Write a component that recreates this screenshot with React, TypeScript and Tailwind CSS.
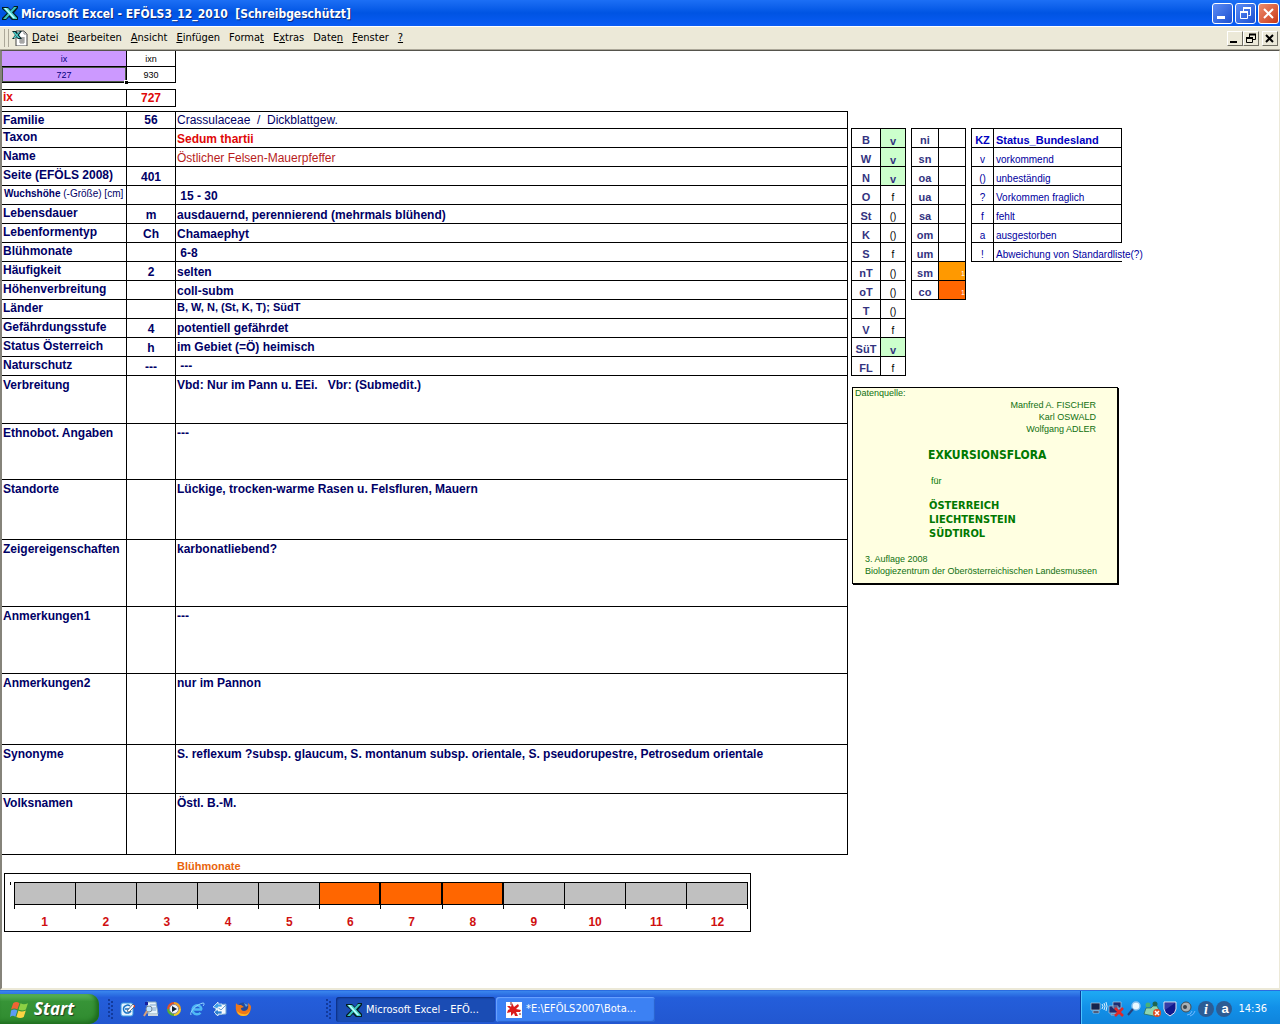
import type { ReactNode } from "react";
import clsx from "clsx";

interface PlantRow {
  label: ReactNode;
  code?: string;
  value?: string;
  height: string;
  valueClass?: string;
  tall?: boolean;
}

const low = "align-bottom";

const plantRows: PlantRow[] = [
  { label: "Familie", code: "56", value: "Crassulaceae  /  Dickblattgew.", height: "h-[17px]", valueClass: "align-bottom font-normal" },
  { label: "Taxon", value: "Sedum thartii", height: "h-[19px]", valueClass: "align-bottom text-[#e00808]" },
  { label: "Name", value: "Östlicher Felsen-Mauerpfeffer", height: "h-[19px]", valueClass: "align-bottom font-normal text-[#b81c1c]" },
  { label: "Seite (EFÖLS 2008)", code: "401", height: "h-[19px]" },
  {
    label: (
      <span className="block pl-px text-[10px] leading-[14px]">
        Wuchshöhe <span className="font-normal">(-Größe) [cm]</span>
      </span>
    ),
    value: " 15 - 30",
    height: "h-[19px]",
    valueClass: low,
  },
  { label: "Lebensdauer", code: "m", value: "ausdauernd, perennierend (mehrmals blühend)", height: "h-[19px]", valueClass: low },
  { label: "Lebenformentyp", code: "Ch", value: "Chamaephyt", height: "h-[19px]", valueClass: low },
  { label: "Blühmonate", value: " 6-8", height: "h-[19px]", valueClass: low },
  { label: "Häufigkeit", code: "2", value: "selten", height: "h-[19px]", valueClass: low },
  { label: "Höhenverbreitung", value: "coll-subm", height: "h-[19px]", valueClass: low },
  { label: "Länder", value: "B, W, N, (St, K, T); SüdT", height: "h-[19px]", valueClass: "align-top text-[11px]" },
  { label: "Gefährdungsstufe", code: "4", value: "potentiell gefährdet", height: "h-[19px]", valueClass: "align-middle" },
  { label: "Status Österreich", code: "h", value: "im Gebiet (=Ö) heimisch", height: "h-[19px]", valueClass: "align-middle" },
  { label: "Naturschutz", code: "---", value: " ---", height: "h-[19px]", valueClass: "align-middle" },
  { label: "Verbreitung", value: "Vbd: Nur im Pann u. EEi.   Vbr: (Submedit.)", height: "h-[48px]", tall: true },
  { label: "Ethnobot. Angaben", value: "---", height: "h-[56px]", tall: true },
  { label: "Standorte", value: "Lückige, trocken-warme Rasen u. Felsfluren, Mauern", height: "h-[60px]", tall: true },
  { label: "Zeigereigenschaften", value: "karbonatliebend?", height: "h-[67px]", tall: true },
  { label: "Anmerkungen1", value: "---", height: "h-[67px]", tall: true },
  { label: "Anmerkungen2", value: "nur im Pannon", height: "h-[71px]", tall: true },
  { label: "Synonyme", value: "S. reflexum ?subsp. glaucum, S. montanum subsp. orientale, S. pseudorupestre, Petrosedum orientale", height: "h-[49px]", tall: true },
  { label: "Volksnamen", value: "Östl. B.-M.", height: "h-[61px]", tall: true },
];

const states: [string, string][] = [
  ["B", "v"],
  ["W", "v"],
  ["N", "v"],
  ["O", "f"],
  ["St", "()"],
  ["K", "()"],
  ["S", "f"],
  ["nT", "()"],
  ["oT", "()"],
  ["T", "()"],
  ["V", "f"],
  ["SüT", "v"],
  ["FL", "f"],
];

const zones: [string, string][] = [
  ["ni", ""],
  ["sn", ""],
  ["oa", ""],
  ["ua", ""],
  ["sa", ""],
  ["om", ""],
  ["um", ""],
  ["sm", "bg-[#ff9900]"],
  ["co", "bg-[#ff6600]"],
];

const legend: [string, string][] = [
  ["v", "vorkommend"],
  ["()", "unbeständig"],
  ["?", "Vorkommen fraglich"],
  ["f", "fehlt"],
  ["a", "ausgestorben"],
  ["!", "Abweichung von Standardliste(?)"],
];

const menus: [string, string, string][] = [
  ["", "D", "atei"],
  ["", "B", "earbeiten"],
  ["", "A", "nsicht"],
  ["", "E", "infügen"],
  ["Forma", "t", ""],
  ["E", "x", "tras"],
  ["Date", "n", ""],
  ["", "F", "enster"],
  ["", "?", ""],
];

const months = [1, 2, 3, 4, 5, 6, 7, 8, 9, 10, 11, 12];
const bloom = [6, 7, 8];

const uiFont = "font-['DejaVu_Sans_Condensed','DejaVu_Sans',sans-serif]";
const cell = "border-b border-r border-black p-0";

function ExcelIcon({ className }: { className?: string }) {
  return (
    <svg viewBox="0 0 16 16" className={className} aria-hidden="true">
      <path d="M0 2h6l3 3 3-4h4v2l-4 5 4 4v3h-6l-3-3-3 3H0v-2l5-5-5-4z" fill="#041c20" />
      <path d="M12 2h3L4 14H1z" fill="#3cc4c0" />
      <path d="M1 3h5l9 10v1h-4z" fill="#48d0cc" />
      <path d="M2 3h2l9 10h-2z" fill="#c4fffa" />
    </svg>
  );
}

function DocIcon() {
  return (
    <svg viewBox="0 0 16 16" className="size-4 shrink-0" aria-hidden="true">
      <path d="M4 1h8l3 3v12H4z" fill="#fff" stroke="#444" />
      <path d="M12 1v3h3M7 8h6M7 10h6M7 12h6M9 7v7M11 7v7" stroke="#888" fill="none" />
      <path d="M0 1h4l2 2 2-2h2L7 5l3 4H6L4 7 2 9H0l3-4z" fill="#06282c" />
      <path d="M1 2h2l5 6H6zM7 2h1L3 8H1z" fill="#4fcfca" />
    </svg>
  );
}

function TitleBar() {
  const base = "flex size-[21px] items-center justify-center rounded-[3px] border border-white";
  const blue = "bg-linear-to-br from-[#5c8cf5] to-[#1c4fd0]";
  return (
    <header className="flex h-[26px] items-center bg-linear-to-b from-[#1c6ff5] via-[#0054e3] to-[#0a5cf5] pl-[2px] pr-[1px]">
      <ExcelIcon className="size-4 shrink-0" />
      <h1 className={clsx(uiFont, "ml-[3px] flex-1 whitespace-pre pt-px text-[12px] font-bold text-white [text-shadow:1px_1px_0_#0a2a80]")}>
        Microsoft Excel - EFÖLS3_12_2010  [Schreibgeschützt]
      </h1>
      <div className="flex gap-[2px]">
        <button type="button" aria-label="Minimieren" className={clsx(base, blue)}>
          <svg viewBox="0 0 19 19" className="size-[19px]"><path d="M4 12h8v3H4z" fill="#fff" /></svg>
        </button>
        <button type="button" aria-label="Wiederherstellen" className={clsx(base, blue)}>
          <svg viewBox="0 0 19 19" className="size-[19px]" fill="none" stroke="#fff">
            <path d="M4.500 8v6.500h7V8M7.500 7V4.500h7v7h-2" />
            <path d="M4 8h8M7 4h8" strokeWidth="2" />
          </svg>
        </button>
        <button type="button" aria-label="Schließen" className={clsx(base, "bg-linear-to-br from-[#ee8c6c] to-[#c8340f]")}>
          <svg viewBox="0 0 19 19" className="size-[19px]"><path d="M5 5l9 9M14 5l-9 9" stroke="#fff" strokeWidth="2" /></svg>
        </button>
      </div>
    </header>
  );
}

function MenuBar() {
  const btn = "flex h-[15px] w-4 items-center justify-center border border-b-[#716f64] border-l-white border-r-[#716f64] border-t-white bg-[#ece9d8]";
  return (
    <nav className={clsx(uiFont, "flex h-[24px] items-center border-b border-t border-b-[#aca899] border-t-white bg-[#ece9d8] pl-1 pr-[2px] text-[11px]")}>
      <div className="mr-[3px] h-[18px] w-[5px] border-x border-[#aca899]" />
      <DocIcon />
      <ul className="ml-1 flex flex-1 gap-[9px] pt-px">
        {menus.map(([before, key, after]) => (
          <li key={before + key + after}>
            <button type="button">
              {before}
              <u>{key}</u>
              {after}
            </button>
          </li>
        ))}
      </ul>
      <div className="flex">
        <button type="button" aria-label="Fenster minimieren" className={btn}>
          <svg viewBox="0 0 14 13" className="h-[13px] w-[14px]"><path d="M2 9h7v2H2z" /></svg>
        </button>
        <button type="button" aria-label="Fenster wiederherstellen" className={btn}>
          <svg viewBox="0 0 14 13" className="h-[13px] w-[14px]" fill="none" stroke="#000">
            <path d="M2.500 6v4.500h6V6M5.500 5V2.500h6v5H9" />
            <path d="M2 6h7M5 2.500h7" strokeWidth="2" />
          </svg>
        </button>
        <button type="button" aria-label="Fenster schließen" className={clsx(btn, "ml-[3px]")}>
          <svg viewBox="0 0 14 13" className="h-[13px] w-[14px]"><path d="M3 3l7 7M10 3l-7 7" stroke="#000" strokeWidth="2" /></svg>
        </button>
      </div>
    </nav>
  );
}

function IndexTables() {
  return (
    <>
      <table className="w-[174px] table-fixed border-separate border-spacing-0 text-center text-[9px] leading-3">
        <tbody>
          <tr className="h-[16px]">
            <th scope="col" className={clsx(cell, "w-[125px] bg-[#cc99ff] font-normal text-[#000080]")}>ix</th>
            <th scope="col" className={clsx(cell, "font-normal")}>ixn</th>
          </tr>
          <tr className="h-[16px]">
            <td className={clsx(cell, "relative text-[#000080]")}>
              <div className="h-[15px] border border-[#4c5a48] bg-[#cc99ff] leading-[14px]">727</div>
              <span className="absolute -bottom-[2px] -right-[2px] size-[4px] border-l border-t border-white bg-black" />
            </td>
            <td className={cell}>930</td>
          </tr>
        </tbody>
      </table>
      <table className="mt-[6px] w-[174px] table-fixed border-separate border-spacing-0 border-t border-black font-bold leading-[15px] text-[#e00808]">
        <tbody>
          <tr className="h-[17px]">
            <th scope="row" className={clsx(cell, "w-[125px] pl-px text-left align-top text-[12px]")}>ix</th>
            <td className={clsx(cell, "text-center align-bottom text-[12px]")}>727</td>
          </tr>
        </tbody>
      </table>
    </>
  );
}

function PlantTable() {
  return (
    <table className="mt-1 w-full table-fixed border-separate border-spacing-0 border-t border-black text-[12px] font-bold leading-[15px] text-[#000066]">
      <tbody>
        {plantRows.map((row, i) => (
          <tr key={i} className={row.height}>
            <th scope="row" className={clsx(cell, "w-[125px] whitespace-nowrap pl-px text-left align-top", row.tall ? "pt-[2px]" : "pt-px")}>
              {row.label}
            </th>
            <td className={clsx(cell, "w-[49px] text-center align-bottom")}>{row.code}</td>
            <td className={clsx(cell, "whitespace-pre pl-px", row.tall && "pt-[2px]", row.valueClass ?? "align-top")}>{row.value}</td>
          </tr>
        ))}
      </tbody>
    </table>
  );
}

function BloomChart() {
  return (
    <section className="font-bold">
      <h2 className="h-[18px] pl-[175px] pt-1 text-[11px] leading-[14px] text-[#e8640c]">Blühmonate</h2>
      <div className="relative ml-[2px] h-[59px] w-[747px] border border-black pl-[9px] pr-[2px] pt-2">
        <span className="absolute left-[5px] top-2 h-[3px] w-px bg-black" />
        <div className="grid grid-cols-12 border-r border-black">
          {months.map((m) => (
            <div key={m} className="border-l border-black">
              <div className={clsx("h-[23px] border-y border-black", bloom.includes(m) ? "border-r bg-[#ff6600]" : "bg-[#c0c0c0]")} />
              <div className="h-1" />
            </div>
          ))}
        </div>
        <div className="grid grid-cols-12 pt-[5px] text-center text-[12px] leading-4 text-[#d01010]">
          {months.map((m) => (
            <span key={m}>{m}</span>
          ))}
        </div>
      </div>
    </section>
  );
}

function SideTables() {
  const table = "table-fixed border-separate border-spacing-0 border-l border-t border-black leading-3";
  const th = "text-center align-bottom text-[11px] font-bold leading-[14px] text-[#333380]";
  return (
    <div className="flex items-start gap-[5px] text-[10px]">
      <table className={clsx(table, "w-[55px]")}>
        <tbody>
          {states.map(([name, status]) => (
            <tr key={name} className="h-[19px]">
              <th scope="row" className={clsx(cell, th, "w-[29px]")}>{name}</th>
              <td className={clsx(cell, "text-center align-bottom", status === "v" && "bg-[#ccffcc] text-[11px] font-bold text-[#333380]")}>{status}</td>
            </tr>
          ))}
        </tbody>
      </table>
      <table className={clsx(table, "w-[55px]")}>
        <tbody>
          {zones.map(([name, color]) => (
            <tr key={name} className="h-[19px]">
              <th scope="row" className={clsx(cell, th, "w-[27px]")}>{name}</th>
              <td className={clsx(cell, "text-right align-bottom text-[7px] text-white", color)}>{color && "1"}</td>
            </tr>
          ))}
        </tbody>
      </table>
      <table className={clsx(table, "w-[151px] text-[#0000a0]")}>
        <thead>
          <tr className="h-[19px] align-bottom text-[11px] font-bold leading-[14px] text-[#0000c0]">
            <th scope="col" className={clsx(cell, "w-[22px]")}>KZ</th>
            <th scope="col" className={clsx(cell, "pl-[2px] text-left")}>Status_Bundesland</th>
          </tr>
        </thead>
        <tbody>
          {legend.map(([key, text]) => (
            <tr key={key} className="h-[19px] align-bottom">
              <td className={clsx(cell, "text-center")}>{key}</td>
              <td className={clsx(cell, "whitespace-nowrap pl-[2px]", key === "!" && "border-r-0")}>{text}</td>
            </tr>
          ))}
        </tbody>
      </table>
    </div>
  );
}

function SourceBox() {
  return (
    <aside className="ml-px mt-[11px] w-[266px] border border-black bg-[#ffffe1] px-[2px] pb-[6px] text-[9px] leading-3 text-[#107010] shadow-[1px_1px_0_#000]">
      <p className="leading-[11px]">Datenquelle:</p>
      <div className="pr-[19px] text-right">
        <p>Manfred A. FISCHER</p>
        <p>Karl OSWALD</p>
        <p>Wolfgang ADLER</p>
      </div>
      <div className={clsx(uiFont, "pl-[73px] font-bold text-[#007800]")}>
        <p className="pt-3 text-[12px] leading-4">EXKURSIONSFLORA</p>
        <p className="py-3 pl-[3px] font-['Liberation_Sans',Arial,sans-serif] text-[9px] font-normal leading-3">für</p>
        <div className="pl-px text-[11px] leading-[14px]">
          <p>ÖSTERREICH</p>
          <p>LIECHTENSTEIN</p>
          <p>SÜDTIROL</p>
        </div>
      </div>
      <div className="pl-[10px] pt-3">
        <p>3. Auflage 2008</p>
        <p>Biologiezentrum der Oberösterreichischen Landesmuseen</p>
      </div>
    </aside>
  );
}

function Grip() {
  return (
    <svg viewBox="0 0 6 20" className="h-5 w-[6px] shrink-0" aria-hidden="true">
      {[0, 4, 8, 12, 16].map((y) => (
        <g key={y} fill="#123a9c">
          <rect x="0" y={y} width="2" height="2" />
          <rect x="3" y={y + 2} width="2" height="2" />
        </g>
      ))}
    </svg>
  );
}

function QuickLaunch() {
  const icon = "size-4";
  return (
    <div className="ml-[6px] flex gap-[7px]">
      <button type="button" aria-label="Desktop anzeigen">
        <svg viewBox="0 0 16 16" className={icon}>
          <rect x="1" y="2" width="12" height="13" rx="2" fill="#e4f3ff" stroke="#3a9be0" />
          <path d="M10 5a4 4 0 1 0 1 5M5 8h6" fill="none" stroke="#1772c4" strokeWidth="1.500" />
          <path d="M7 10l6-7 2 2-6 6z" fill="#fff" stroke="#345" strokeWidth=".7" />
          <path d="M13 5l2-1v3z" fill="#e04020" />
        </svg>
      </button>
      <button type="button" aria-label="Suchen">
        <svg viewBox="0 0 16 16" className={icon}>
          <path d="M4 1h9l2 12H5z" fill="#e8f4fc" stroke="#8ab" />
          <path d="M7 4h6M8 7h5M8 9h5" stroke="#7aa6cf" />
          <path d="M5 13h10v2H5z" fill="#c8d4dc" />
          <circle cx="6" cy="8" r="3" fill="#bfe4ff" stroke="#789" />
          <path d="M4 10l-3 5" stroke="#d8a078" strokeWidth="2" />
          <rect x="2" y="1" width="3" height="3" fill="#1420a0" />
        </svg>
      </button>
      <button type="button" aria-label="Media Player">
        <svg viewBox="0 0 16 16" className={icon}>
          <path d="M8 8V1a7 7 0 0 1 7 7z" fill="#f0a020" />
          <path d="M8 8h7a7 7 0 0 1-7 7z" fill="#f4c828" />
          <path d="M8 8v7a7 7 0 0 1-7-7z" fill="#58b030" />
          <path d="M8 8H1a7 7 0 0 1 7-7z" fill="#e05028" />
          <circle cx="8" cy="8" r="4.500" fill="#f4f8ff" stroke="#889" />
          <path d="M6 5l5 3-5 3z" fill="#123" />
        </svg>
      </button>
      <button type="button" aria-label="Internet Explorer">
        <svg viewBox="0 0 16 16" className={icon}>
          <path d="M13 8.500H5M12.500 8.500a4.500 4.500 0 1 0-1 3.200" fill="none" stroke="#4fb8f4" strokeWidth="2.500" />
          <path d="M2 14C0 11 8 3 14 2c2 0 1 2 0 3" fill="none" stroke="#8fd4ff" />
        </svg>
      </button>
      <button type="button" aria-label="Outlook Express">
        <svg viewBox="0 0 16 16" className={icon}>
          <path d="M3 4l11-1v10l-10 1z" fill="#f2f8ff" stroke="#6a9fd0" />
          <path d="M4 5l5 4 5-5" fill="none" stroke="#6a9fd0" />
          <path d="M1 6l5-5v2h4v3H6v2z" fill="#3f9ee8" stroke="#fff" strokeWidth=".7" />
          <path d="M2 11l4-3v2h4v3H6v2z" fill="#2c80d0" stroke="#fff" strokeWidth=".7" />
        </svg>
      </button>
      <button type="button" aria-label="Firefox">
        <svg viewBox="0 0 16 16" className={icon}>
          <circle cx="8" cy="7" r="5.500" fill="#224a9c" />
          <path d="M9 2l4 2-2 2z" fill="#5da4e8" />
          <path d="M1 2c-1 8 1 13 7 13s8-5 8-9c0-2-2-3-3-4 1 4 0 8-4 8-2 0-3-1-3-3l3-1-3-2c-2 0-4 0-5-2z" fill="#f07818" />
          <path d="M2 10c1 4 4 5 7 5 4 0 5-3 6-6-2 4-4 5-7 4-2 0-4-1-6-3z" fill="#fbb828" />
        </svg>
      </button>
    </div>
  );
}

function Tray() {
  return (
    <div className="flex h-full items-center border-l border-[#0a3a9c] bg-linear-to-b from-[#1eaaf4] via-[#1290e8] to-[#0f84dc] pl-[9px] pr-[13px] pt-[3px] shadow-[inset_1px_0_0_#4cc4ff]">
      <svg viewBox="0 0 148 18" className="h-[18px] w-[148px]" aria-hidden="true">
        <path d="M1 3h9v7H1zM3 11h6v2H3z" fill="#16244c" stroke="#b8c8d8" strokeWidth=".7" />
        <path d="M12 4q2 2 0 5M14 3q2 3 0 7M16 2q2 4 0 9" fill="none" stroke="#d8f0ff" />
        <path d="M23 2h8v6h-8zM19 6h9v7h-9zM21 14h6v1h-6z" fill="#1c2c70" stroke="#b8c8d8" strokeWidth=".7" />
        <path d="M25 8l8 8M33 8l-8 8" stroke="#e02828" strokeWidth="2.500" />
        <circle cx="46" cy="6" r="4" fill="#e8f8ff" stroke="#8cc4f0" strokeWidth="1.500" />
        <path d="M43 9l-5 6" stroke="#28427c" strokeWidth="2" />
        <g transform="translate(-2 0)">
          <circle cx="60" cy="5" r="2.500" fill="#4ab078" />
          <circle cx="67" cy="4" r="2.500" fill="#1e6450" />
          <path d="M56 14l2-6h5l2-2h4l3 6-6 4z" fill="#8ed4b0" stroke="#286850" strokeWidth=".7" />
          <circle cx="69" cy="13" r="4" fill="#e04c20" />
          <path d="M67 11l4 4M71 11l-4 4" stroke="#fff" strokeWidth="1.500" />
        </g>
        <path d="M74 2h12v7q0 4-6 7-6-3-6-7z" fill="#10188c" stroke="#e4e8f4" />
        <path d="M75 3h10L75 10z" fill="#343ca8" />
        <circle cx="96" cy="7" r="5" fill="#a8b0b4" stroke="#404c54" />
        <circle cx="95" cy="7" r="2" fill="#38444c" />
        <path d="M97 15q4 0 5-4M100 16q4-1 5-5" fill="none" stroke="#70b8ff" />
        <circle cx="116" cy="9" r="8" fill="#2c5c94" />
        <circle cx="134" cy="9" r="8" fill="#2c5c94" />
        <text x="116" y="14" textAnchor="middle" fill="#fff" className="font-['Liberation_Serif',serif] text-[14px] font-bold italic">i</text>
        <text x="135" y="13" textAnchor="middle" fill="#fff" className="font-['Liberation_Sans',sans-serif] text-[13px] font-bold">a</text>
      </svg>
      <time className="text-[11px]">14:36</time>
    </div>
  );
}

function Taskbar() {
  const task = "flex h-[25px] w-[159px] min-w-0 items-center gap-1 rounded-[3px] pl-[10px]";
  return (
    <footer className={clsx(uiFont, "flex h-[34px] items-center border-t border-[#2a6ce0] bg-linear-to-b from-[#3a86ee] via-[#245edb] via-20% to-[#2257d0] text-[11px] text-white")}>
      <button
        type="button"
        className="mt-[3px] flex h-[30px] w-[99px] items-center gap-[5px] rounded-r-[10px] bg-linear-to-b from-[#5cb45c] via-[#379437] via-25% to-[#2f8a2f] pl-[10px] font-['Open_Sans',sans-serif] text-[17px] font-bold italic shadow-[inset_-3px_-2px_4px_#1d6a1d] [text-shadow:1px_1px_1px_#204020]"
      >
        <svg viewBox="0 0 18 18" className="size-[19px]" aria-hidden="true">
          <path d="M3 3q3-2 6 0L7 9q-3-2-6 0z" fill="#f06434" />
          <path d="M10 3q3 2 7 0l-2 6q-3 2-7 0z" fill="#8cd044" />
          <path d="M1 10q3-2 6 0l-2 6q-2-2-5 0z" fill="#5c9cf4" />
          <path d="M8 10q3 2 7 0l-2 6q-3 2-7 0z" fill="#fcd444" />
        </svg>
        Start
      </button>
      <div className="ml-[9px] flex w-[228px] items-center pt-[3px]">
        <Grip />
        <QuickLaunch />
        <div className="ml-auto mr-1"><Grip /></div>
      </div>
      <div className="flex flex-1 gap-[1px] pt-1">
        <button type="button" className={clsx(task, "bg-[#1a4cb4] shadow-[inset_1px_1px_2px_#0c2c7c]")}>
          <ExcelIcon className="size-4 shrink-0" />
          <span className="truncate pt-px">Microsoft Excel - EFÖ...</span>
        </button>
        <button type="button" className={clsx(task, "bg-[#3c81f3] shadow-[inset_1px_1px_1px_#6ca4ff,inset_-1px_-1px_1px_#2a62cc]")}>
          <svg viewBox="0 0 16 16" className="size-4 shrink-0 bg-white" aria-hidden="true">
            <path d="M6 1l2 4 4-3 1 2-3 3 5 1-1 2-4 0 2 4-3 0-1-3-3 3 0-4-4 1 1-3 2-1-3-3 3 0 1 1z" fill="#dc1c1c" />
            <path d="M5 0v3M13 12h2" stroke="#802020" />
          </svg>
          <span className="truncate">*E:\EFÖLS2007\Bota...</span>
        </button>
      </div>
      <Tray />
    </footer>
  );
}

export default function App() {
  return (
    <div className="flex min-h-screen flex-col bg-white font-['Liberation_Sans',Arial,sans-serif] text-black">
      <TitleBar />
      <MenuBar />
      <main className="flex flex-1 border-b-2 border-l-2 border-r border-t border-b-[#ece9d8] border-l-[#85837a] border-r-[#ece9d8] border-t-[#55534c]">
        <div className="min-w-0 flex-1">
          <IndexTables />
          <PlantTable />
          <BloomChart />
        </div>
        <div className="w-[431px] shrink-0 pl-[3px] pt-[77px]">
          <SideTables />
          <SourceBox />
        </div>
      </main>
      <Taskbar />
    </div>
  );
}
